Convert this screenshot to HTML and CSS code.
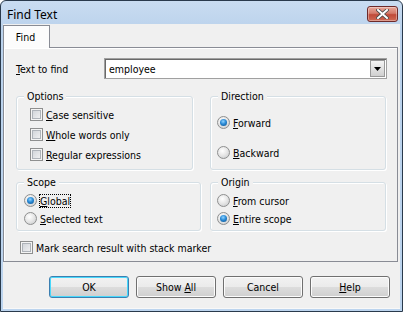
FILE: index.html
```html
<!DOCTYPE html>
<html>
<head>
<meta charset="utf-8">
<link rel="stylesheet" href="styles.css">
</head>
<body>
<div class="window">
  <div class="titlebar">
    <span class="title">Find Text</span>
    <div class="close">
      <svg width="13" height="10" viewBox="0 0 13 10"><path d="M2 1 L11 9 M11 1 L2 9" stroke="#4a4a4a" stroke-width="3.6" stroke-linecap="square"/><path d="M2 1 L11 9 M11 1 L2 9" stroke="#fff" stroke-width="2" stroke-linecap="square"/></svg>
    </div>
  </div>
  <div class="client">
    <div class="tabs"><div class="tab">Find</div></div>
    <div class="panel">
      <div class="findrow">
        <span class="lbl"><u>T</u>ext to find</span>
        <div class="combo"><span class="val">employee</span><div class="dd"><svg width="7" height="4" viewBox="0 0 7 4"><path d="M0 0h7L3.5 4z" fill="#000"/></svg></div></div>
      </div>
      <div class="grouprow first">
        <div class="group g-options">
          <span class="legend">Options</span>
          <div class="item"><span class="chk"></span><span><u>C</u>ase sensitive</span></div>
          <div class="item"><span class="chk"></span><span><u>W</u>hole words only</span></div>
          <div class="item"><span class="chk"></span><span><u>R</u>egular expressions</span></div>
        </div>
        <div class="group g-direction">
          <span class="legend">Direction</span>
          <div class="item"><span class="radio on"></span><span><u>F</u>orward</span></div>
          <div class="item"><span class="radio"></span><span><u>B</u>ackward</span></div>
        </div>
      </div>
      <div class="grouprow second">
        <div class="group g-scope">
          <span class="legend">Scope</span>
          <div class="item"><span class="radio on"></span><span class="focus"><u>G</u>lobal</span></div>
          <div class="item"><span class="radio"></span><span><u>S</u>elected text</span></div>
        </div>
        <div class="group g-origin">
          <span class="legend">Origin</span>
          <div class="item"><span class="radio"></span><span><u>F</u>rom cursor</span></div>
          <div class="item"><span class="radio on"></span><span><u>E</u>ntire scope</span></div>
        </div>
      </div>
      <div class="item mark"><span class="chk"></span><span>Mark search result with stack marker</span></div>
    </div>
    <div class="buttons">
      <div class="btn default"><span>OK</span></div>
      <div class="btn"><span>Show <u>A</u>ll</span></div>
      <div class="btn"><span>Cancel</span></div>
      <div class="btn"><span><u>H</u>elp</span></div>
    </div>
  </div>
</div>
</body>
</html>
```
FILE: styles.css
```css
html, body { margin: 0; padding: 0; background: #fff; }
body { font-family: "DejaVu Sans Condensed", "DejaVu Sans", sans-serif; font-size: 10.5px; color: #000; }
u { text-decoration: underline; text-underline-offset: 1px; }

.window {
  width: 403px; height: 312px; box-sizing: border-box;
  border: 1px solid #2a3a4c; border-radius: 6px 6px 0 0;
  background: linear-gradient(#c9dcf1, #bad2ec 30px, #bcd4ee);
  display: flex; flex-direction: column;
  overflow: hidden;
}
.titlebar {
  height: 23px; flex: none; display: flex; align-items: center;
  padding: 0 4px 0 6px; box-sizing: border-box;
}
.title { font-family: "Noto Sans", "Liberation Sans", sans-serif; font-size: 12px; color: #000; flex: 1; padding-top: 3px; }
.close {
  width: 31px; height: 16px; margin-top: 2px; box-sizing: border-box;
  border: 1px solid #6d2a2a; border-radius: 3px;
  background: linear-gradient(#e9a99a, #d47a6a 45%, #c04a38 55%, #cf6a55);
  display: flex; align-items: center; justify-content: center;
  box-shadow: inset 0 0 0 1px rgba(255,255,255,0.35);
}

.client {
  flex: 1; margin: 0 2px 2px 2px; background: #f0f0f0;
  border-bottom: 1px solid #f8f8f8;
  display: flex; flex-direction: column;
}
.tabs { height: 23px; display: flex; align-items: flex-end; padding-left: 0; }
.tab {
  width: 47px; height: 23px; box-sizing: border-box;
  border: 1px solid #898c95; border-bottom: none;
  background: #fcfcfc; display: flex; align-items: center; justify-content: center;
  position: relative; top: 1px; z-index: 1; padding-right: 2px;
}
.panel {
  margin: 0 2px 0 0; height: 215px; box-sizing: border-box;
  border: 1px solid #898c95; background: #f0f0f0;
  box-shadow: inset 1px 1px 0 #fff;
  padding: 10px 10px 0 12px;
  display: flex; flex-direction: column;
}
.findrow { display: flex; align-items: center; height: 21px; }
.lbl { width: 88px; }
.combo {
  width: 283px; height: 21px; box-sizing: border-box;
  border: 1px solid #a0a0a0; background: #fff;
  box-shadow: inset 1px 1px 0 #696969;
  display: flex; align-items: center; padding: 0 1px 0 4px;
}
.combo .val { flex: 1; }
.dd {
  width: 15px; height: 17px; box-sizing: border-box;
  border: 1px solid #999; background: linear-gradient(#f4f4f4, #e2e2e2 50%, #d0d0d0);
  display: flex; align-items: center; justify-content: center;
}

.grouprow { display: flex; }
.grouprow.first { margin-top: 17px; height: 74px; }
.grouprow.second { margin-top: 12px; height: 49px; }
.group {
  position: relative; box-sizing: border-box;
  border: 1px solid #d5dfe5; border-radius: 3px;
  box-shadow: inset 1px 1px 0 #fff, 1px 1px 0 #fff;
  display: flex; flex-direction: column;
}
.legend {
  position: absolute; top: -8px; left: 7px; padding: 0 3px;
  background: #f0f0f0; line-height: 14px;
}
.g-options { width: 177px; padding: 11px 0 0 13px; gap: 7px; }
.g-direction { width: 176px; margin-left: 17px; padding: 19px 0 0 6px; gap: 17px; }
.g-scope { width: 185px; padding: 11px 0 0 7px; gap: 5px; }
.g-origin { width: 176px; margin-left: 9px; padding: 11px 0 0 6px; gap: 5px; }
.item { display: flex; align-items: center; height: 13px; gap: 3px; }

.chk {
  width: 13px; height: 13px; box-sizing: border-box; flex: none;
  border: 1px solid #8e8f8f; background: #f4f4f4;
  box-shadow: inset 0 0 0 1px #f4f4f4, inset 0 0 0 2px #aeb3b9;
  background-image: linear-gradient(135deg, #cbcfd5, #f6f6f6);
}
.radio {
  width: 13px; height: 13px; box-sizing: border-box; flex: none; border-radius: 50%;
  border: 1px solid #8e8f8f;
  background: radial-gradient(circle at 40% 35%, #fff, #e8e8e8 45%, #c4c6c8 100%);
  position: relative;
}
.radio.on::after {
  content: ""; position: absolute; left: 2px; top: 2px; width: 7px; height: 7px; border-radius: 50%;
  background: radial-gradient(circle at 45% 35%, #8fd3ff, #2a8ad6 45%, #0c4e86 100%);
}
.focus { outline: 1px dotted #000; outline-offset: 0; }
.mark { margin-top: 10px; margin-left: 4px; }

.buttons { display: flex; justify-content: flex-end; gap: 7px; padding: 14px 10px 0 0; }
.btn {
  width: 80px; height: 22px; box-sizing: border-box;
  border: 1px solid #707070; border-radius: 3px;
  background: linear-gradient(#f2f2f2, #ebebeb 50%, #dddddd 50%, #cfcfcf);
  box-shadow: inset 0 0 0 1px #fcfcfc;
  display: flex; align-items: center; justify-content: center;
}
.btn.default {
  border-color: #3c7fb1;
  box-shadow: inset 0 0 0 1px #48d8fb;
}
```
